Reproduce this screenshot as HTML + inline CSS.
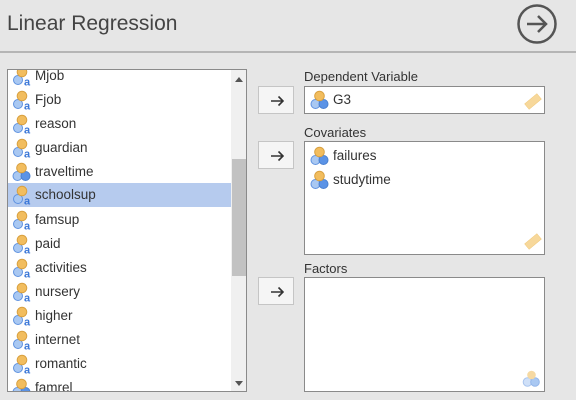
<!DOCTYPE html>
<html><head><style>
*{margin:0;padding:0;box-sizing:border-box}
body{width:576px;height:400px;background:#e6e6e6;font-family:"Liberation Sans",sans-serif;position:relative;overflow:hidden;color:#333}
.a{position:absolute}
.title{left:7px;top:12px;font-size:21px;color:#444}
.hr{left:0;top:51px;width:576px;height:2px;background:#b5b5b5}
.box{background:#fff;border:1px solid #8a8a8a}
.row{position:absolute;left:0;width:223px;height:24px;font-size:13.5px;line-height:24px;padding-left:27px;color:#333}
.row svg{position:absolute;left:4px;top:2px}
.sel{background:#b6cbee}
.btn{width:36px;height:28px;background:#f5f5f5;border:1px solid #c5c5c5}
.btn svg{position:absolute;left:11px;top:8px}
.lbl{font-size:13px;color:#333}
.it{position:absolute;left:5px;font-size:13.5px;height:24px;line-height:24px;padding-left:23px}
.it svg{position:absolute;left:0;top:2px}
</style></head><body>
<svg width="0" height="0" style="position:absolute">
<defs>
<g id="nom"><circle cx="6" cy="14" r="4.5" fill="#a9c8f2" stroke="#5f92e0" stroke-width="1"/><circle cx="10" cy="6" r="4.8" fill="#f2bd5e" stroke="#d9a141" stroke-width="1"/><text x="12" y="19.5" font-size="11" font-family="Liberation Sans" fill="#3c78d8" font-weight="bold">a</text></g>
<g id="ord"><circle cx="5.5" cy="14" r="4.5" fill="#a9c8f2" stroke="#5f92e0"/><circle cx="13.5" cy="14" r="4.5" fill="#5b93e6" stroke="#4a80d0"/><circle cx="9.5" cy="6" r="4.8" fill="#f2bd5e" stroke="#d9a141"/></g>
<g id="arr"><path d="M1 6H13M8.5 1.5 13 6 8.5 10.5" fill="none" stroke="#333" stroke-width="1.6"/></g>
<g id="rul"><rect x="2" y="7" width="16" height="7" transform="rotate(-40 10 10.5)" fill="#f7d89b" stroke="#f0c878" stroke-width="0.5"/></g>
</defs></svg>
<div class="a title">Linear Regression</div>
<svg class="a" style="left:516px;top:3px" width="42" height="42" viewBox="0 0 42 42"><circle cx="21" cy="21" r="18.5" fill="none" stroke="#555" stroke-width="2.5"/><path d="M11 21H30M22 13l8 8-8 8" fill="none" stroke="#555" stroke-width="2.5"/></svg>
<div class="a hr"></div>

<div class="a box" style="left:7px;top:69px;width:240px;height:323px;overflow:hidden">
<div class="row" style="top:-6px"><svg width="20" height="22"><use href="#nom"/></svg>Mjob</div>
<div class="row" style="top:18px"><svg width="20" height="22"><use href="#nom"/></svg>Fjob</div>
<div class="row" style="top:42px"><svg width="20" height="22"><use href="#nom"/></svg>reason</div>
<div class="row" style="top:66px"><svg width="20" height="22"><use href="#nom"/></svg>guardian</div>
<div class="row" style="top:90px"><svg width="20" height="22"><use href="#ord"/></svg>traveltime</div>
<div class="row sel" style="top:113px"><svg width="20" height="22"><use href="#nom"/></svg>schoolsup</div>
<div class="row" style="top:138px"><svg width="20" height="22"><use href="#nom"/></svg>famsup</div>
<div class="row" style="top:162px"><svg width="20" height="22"><use href="#nom"/></svg>paid</div>
<div class="row" style="top:186px"><svg width="20" height="22"><use href="#nom"/></svg>activities</div>
<div class="row" style="top:210px"><svg width="20" height="22"><use href="#nom"/></svg>nursery</div>
<div class="row" style="top:234px"><svg width="20" height="22"><use href="#nom"/></svg>higher</div>
<div class="row" style="top:258px"><svg width="20" height="22"><use href="#nom"/></svg>internet</div>
<div class="row" style="top:282px"><svg width="20" height="22"><use href="#nom"/></svg>romantic</div>
<div class="row" style="top:306px"><svg width="20" height="22"><use href="#ord"/></svg>famrel</div>
<div class="a" style="left:223px;top:0;width:16px;height:321px;background:#f0f0f0"></div>
<div class="a" style="left:224px;top:89px;width:14px;height:117px;background:#c2c2c2"></div>
<div class="a" style="left:227px;top:7px;width:0;height:0;border-left:4px solid transparent;border-right:4px solid transparent;border-bottom:5px solid #555"></div>
<div class="a" style="left:227px;top:311px;width:0;height:0;border-left:4px solid transparent;border-right:4px solid transparent;border-top:5px solid #555"></div>
</div>

<div class="a btn" style="left:258px;top:86px"><svg width="14" height="12"><use href="#arr"/></svg></div>
<div class="a btn" style="left:258px;top:141px"><svg width="14" height="12"><use href="#arr"/></svg></div>
<div class="a btn" style="left:258px;top:277px"><svg width="14" height="12"><use href="#arr"/></svg></div>

<div class="a lbl" style="left:304px;top:69px">Dependent Variable</div>
<div class="a box" style="left:304px;top:86px;width:241px;height:28px">
<div class="it" style="top:1px"><svg width="20" height="22"><use href="#ord"/></svg>G3</div>
<svg class="a" style="left:218px;top:4px" width="20" height="20"><use href="#rul"/></svg>
</div>
<div class="a lbl" style="left:304px;top:125px">Covariates</div>
<div class="a box" style="left:304px;top:141px;width:241px;height:114px">
<div class="it" style="top:2px"><svg width="20" height="22"><use href="#ord"/></svg>failures</div>
<div class="it" style="top:26px"><svg width="20" height="22"><use href="#ord"/></svg>studytime</div>
<svg class="a" style="left:218px;top:89px" width="20" height="20"><use href="#rul"/></svg>
</div>
<div class="a lbl" style="left:304px;top:261px">Factors</div>
<div class="a box" style="left:304px;top:277px;width:241px;height:115px">
<svg class="a" style="left:217px;top:91px" width="20" height="20" viewBox="0 0 20 20"><circle cx="5.5" cy="13" r="4.3" fill="#cfe0f8" stroke="#a9c5ee"/><circle cx="13" cy="13" r="4.3" fill="#a9c8f2" stroke="#93b6ea"/><circle cx="9.5" cy="6" r="4.3" fill="#f6d9a2"/></svg>
</div>
</body></html>
